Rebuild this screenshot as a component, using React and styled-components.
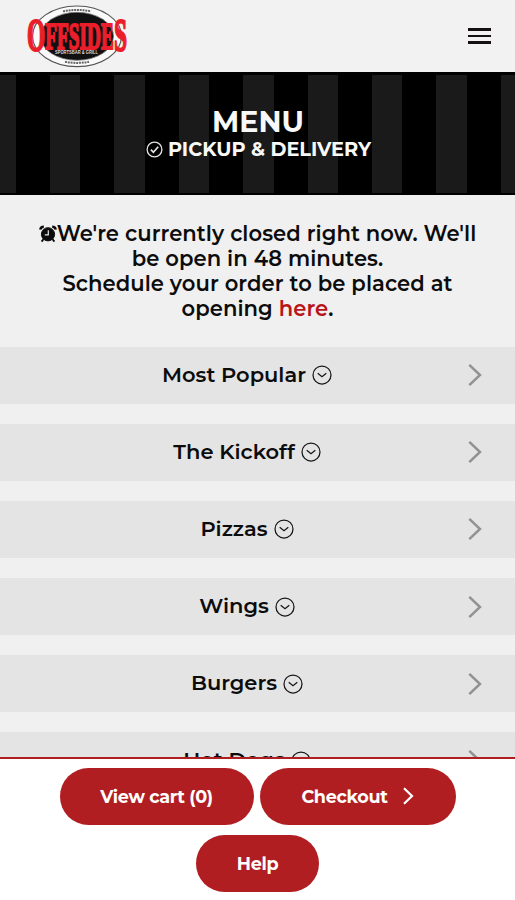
import styled, { createGlobalStyle } from "styled-components";

const GlobalStyle = createGlobalStyle`
  * {
    box-sizing: border-box;
  }

  body {
    margin: 0;
    background: #f0f0f0;
    color: #0c0c0c;
    font-family: "Montserrat", "Inter", sans-serif;
  }
`;

const Page = styled.div`
  height: 900px;
  display: flex;
  flex-direction: column;
  overflow: hidden;
`;

const Header = styled.header`
  flex: none;
  height: 72px;
  padding: 0 24px;
  display: flex;
  align-items: center;
  justify-content: space-between;
  background: #f2f2f2;
`;

const MenuButton = styled.button`
  width: 23px;
  height: 16px;
  padding: 0;
  border: 0;
  background: none;
  display: flex;
  flex-direction: column;
  justify-content: space-between;

  span {
    height: 2.6px;
    background: #141014;
  }
`;

const Hero = styled.section`
  flex: none;
  height: 123px;
  padding-top: 33px;
  display: flex;
  flex-direction: column;
  align-items: center;
  color: #f8f8f8;
  border: solid #000000;
  border-width: 3px 0 2px;
  background: repeating-linear-gradient(
    90deg,
    #1a1a1a 0 30.4px,
    #000000 30.4px 64.4px
  );
  background-position-x: -14.4px;
  background-size: calc(100% + 64.4px) 100%;
`;

const Title = styled.h1`
  margin: 0;
  padding-left: 1px;
  font-size: 28.5px;
  line-height: 28px;
  font-weight: 700;
`;

const Subtitle = styled.p`
  margin: 0;
  padding-left: 2px;
  display: flex;
  align-items: center;
  gap: 5px;
  font-size: 19.3px;
  line-height: 27px;
  font-weight: 700;
`;

const Notice = styled.section`
  flex: none;
  height: 151.5px;
  padding-top: 26px;
  display: flex;
  flex-direction: column;
  align-items: center;
`;

const NoticeLine = styled.div`
  display: flex;
  align-items: center;
  font-size: 21.1px;
  line-height: 25px;
  font-weight: 600;
  letter-spacing: 0.06px;
  white-space: pre;
`;

const HereLink = styled.a`
  color: #b8151b;
`;

const Categories = styled.nav`
  flex: 1;
  min-height: 0;
  overflow: hidden;
  display: flex;
  flex-direction: column;
  gap: 20.2px;
`;

const Category = styled.div`
  flex: none;
  height: 57px;
  padding-right: 33px;
  display: flex;
  align-items: center;
  background: #e4e4e4;
`;

const CategoryName = styled.div`
  flex: 1;
  padding-left: 26px;
  display: flex;
  align-items: center;
  justify-content: center;
  gap: 6px;
  font-size: 21px;
  font-weight: 600;

  span {
    padding-bottom: 2px;
  }
`;

const Footer = styled.footer`
  flex: none;
  height: 143.5px;
  padding-top: 9px;
  display: flex;
  flex-wrap: wrap;
  align-content: flex-start;
  justify-content: center;
  gap: 10px 6px;
  background: #ffffff;
  border-top: 2.5px solid #b11e22;
`;

const PillButton = styled.button`
  width: ${({ $width }) => $width}px;
  height: 57px;
  padding: 0;
  border: 0;
  border-radius: 29px;
  display: flex;
  align-items: center;
  justify-content: center;
  gap: 14px;
  background: #b11e22;
  color: #ffffff;
  font-family: inherit;
  font-size: 17.6px;
  font-weight: 700;
  letter-spacing: -0.33px;
`;

const categories = ["Most Popular", "The Kickoff", "Pizzas", "Wings", "Burgers", "Hot Dogs"];

function Logo() {
  return (
    <svg width="106" height="66" viewBox="24 3 106 66" aria-label="Offsides">
      <ellipse cx="77" cy="36.3" rx="44.5" ry="30.3" fill="#fafafa" stroke="#555" strokeWidth="1.2" />
      <ellipse cx="77" cy="36.3" rx="36.5" ry="24" fill="#111" stroke="#777" strokeWidth="0.8" />
      <path d="M63 11.3Q77 8.6 91 11.3M65 61.8Q77 64 89 61.8" fill="none" stroke="#666" strokeWidth="2" strokeDasharray="2 0.8" />
      <text
        transform="translate(27 50.6) scale(1 1.85)"
        fontFamily="Liberation Serif, serif"
        fontWeight="700"
        fontSize="21"
        fill="#ea1f2b"
        stroke="#ea1f2b"
        strokeWidth="1.1"
        textLength="100"
        lengthAdjust="spacingAndGlyphs"
      >
        <tspan fontSize="25.5">O</tspan>
        <tspan dy="-1">FFSIDE</tspan>
        <tspan dy="1" fontSize="25.5">S</tspan>
      </text>
      <text
        x="55"
        y="54.3"
        fontFamily="Liberation Sans, sans-serif"
        fontWeight="700"
        fontSize="5"
        fill="#d8d8d8"
        textLength="43"
        lengthAdjust="spacingAndGlyphs"
      >
        SPORTSBAR &amp; GRILL
      </text>
    </svg>
  );
}

function CheckIcon() {
  return (
    <svg width="17" height="17" viewBox="0 0 17 17" fill="none" stroke="#e4e4e4" strokeWidth="1.3">
      <circle cx="8.5" cy="8.5" r="7.4" />
      <path d="M4.9 8.7l2.5 2.6 4.8-5.6" strokeWidth="1.7" />
    </svg>
  );
}

function AlarmIcon() {
  return (
    <svg width="18" height="18" viewBox="0 0 18 18" fill="none" stroke="#0c0c0c">
      <circle cx="9" cy="9.3" r="6.6" fill="#0c0c0c" />
      <path d="M1.3 4.6Q1.6 1.8 4.8 1.8M16.7 4.6Q16.4 1.8 13.2 1.8" strokeWidth="2.4" />
      <path d="M4.6 14l-2 2.6M13.4 14l2 2.6" strokeWidth="1.8" />
      <path d="M9.3 5.2v4.6H5.8" stroke="#e8e8e8" strokeWidth="1.2" />
    </svg>
  );
}

function CircleDownIcon() {
  return (
    <svg width="20" height="20" viewBox="0 0 20 20" fill="none" stroke="#161616" strokeWidth="1.25">
      <circle cx="10" cy="10" r="9" />
      <path d="M5.7 8.2l4.3 3.6 4.3-3.6" />
    </svg>
  );
}

function ArrowIcon() {
  return (
    <svg width="14" height="24" viewBox="0 0 14 24" fill="none" stroke="#929292" strokeWidth="2.5">
      <path d="M1.3 1.8L12 12 1.3 22.2" />
    </svg>
  );
}

function CheckoutArrow() {
  return (
    <svg width="12" height="18" viewBox="0 0 12 18" fill="none" stroke="#fff" strokeWidth="2.2">
      <path d="M2 1.2L10 9 2 16.8" />
    </svg>
  );
}

function App() {
  return (
    <Page>
      <GlobalStyle />
      <Header>
        <Logo />
        <MenuButton aria-label="Open menu">
          <span />
          <span />
          <span />
        </MenuButton>
      </Header>

      <Hero>
        <Title>MENU</Title>
        <Subtitle>
          <CheckIcon />
          PICKUP &amp; DELIVERY
        </Subtitle>
      </Hero>

      <Notice>
        <NoticeLine>
          <AlarmIcon />
          We're currently closed right now. We'll
        </NoticeLine>
        <NoticeLine>be open in 48 minutes.</NoticeLine>
        <NoticeLine>Schedule your order to be placed at</NoticeLine>
        <NoticeLine>
          opening <HereLink>here</HereLink>.
        </NoticeLine>
      </Notice>

      <Categories>
        {categories.map((name) => (
          <Category key={name}>
            <CategoryName>
              <span>{name}</span>
              <CircleDownIcon />
            </CategoryName>
            <ArrowIcon />
          </Category>
        ))}
      </Categories>

      <Footer>
        <PillButton $width={194}>View cart (0)</PillButton>
        <PillButton $width={196}>
          Checkout
          <CheckoutArrow />
        </PillButton>
        <PillButton $width={123}>Help</PillButton>
      </Footer>
    </Page>
  );
}

export default App;
